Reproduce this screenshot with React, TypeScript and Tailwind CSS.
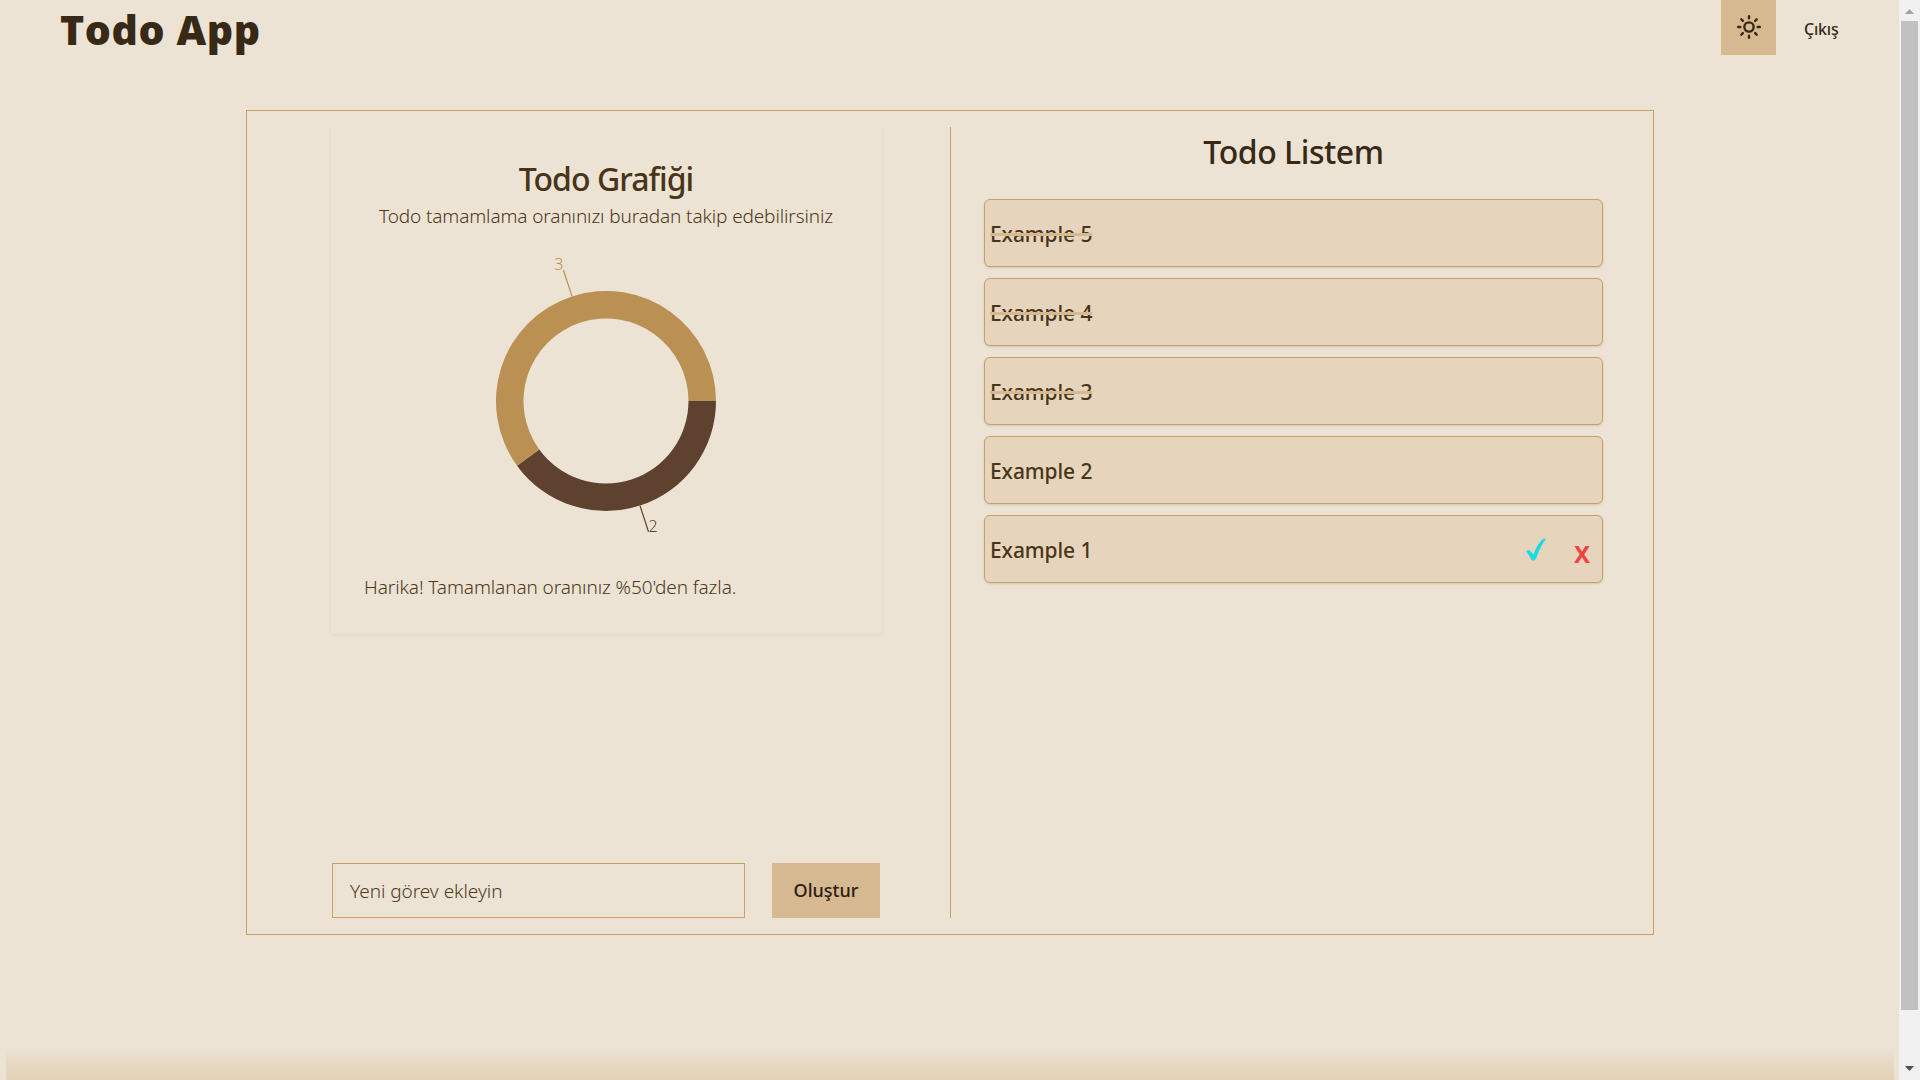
import React from "react";

const todos = [
  { text: "Example 5", done: true },
  { text: "Example 4", done: true },
  { text: "Example 3", done: true },
  { text: "Example 2", done: false },
  { text: "Example 1", done: false, active: true },
];

function SunIcon() {
  return (
    <svg className="mb-[1px]" width="26" height="26" viewBox="0 0 24 24" fill="none" stroke="currentColor" strokeWidth="2.2" strokeLinecap="round">
      <circle cx="12" cy="12" r="4.3" />
      <path d="M12 2v2M12 20v2M4.93 4.93l1.41 1.41M17.66 17.66l1.41 1.41M2 12h2M20 12h2M6.34 17.66l-1.41 1.41M19.07 4.93l-1.41 1.41" />
    </svg>
  );
}

function Donut() {
  return (
    <svg className="block" width="300" height="300" viewBox="-150 -150 300 300" fontSize="16" fontWeight="300">
      <path d="M110 0A110 110 0 0 1 -88.99 64.66L-66.74 48.49A82.5 82.5 0 0 0 82.5 0Z" fill="#5e412e" />
      <path d="M-88.99 64.66A110 110 0 1 1 110 0L82.5 0A82.5 82.5 0 1 0 -66.74 48.49Z" fill="#ba9153" />
      <path d="M34 104.6L42.5 130.8" stroke="#5e412e" strokeWidth="1.2" />
      <path d="M-34 -104.6L-42.5 -130.8" stroke="#ba9153" strokeWidth="1.2" />
      <text x="42.5" y="131" fill="#5e412e">2</text>
      <text x="-42.5" y="-131" textAnchor="end" fill="#ba9153">3</text>
    </svg>
  );
}

function Scrollbar() {
  return (
    <div className="flex h-full w-[21px] shrink-0 flex-col items-center bg-[#f1f1f1]">
      <svg className="block shrink-0" width="21" height="21" viewBox="0 0 21 21"><path d="M6 14h9l-4.5-5z" fill="#a3a3a3" /></svg>
      <div className="h-[989px] w-[17px] bg-[#c1c1c1]" />
      <div className="grow" />
      <svg className="block shrink-0" width="21" height="21" viewBox="0 0 21 21"><path d="M6 7h9l-4.5 5z" fill="#505050" /></svg>
    </div>
  );
}

export default function App() {
  return (
    <div className="flex h-[1080px] w-[1920px] overflow-hidden bg-[#ece3d4] font-['Noto_Sans',sans-serif] text-[#372916]">
      <div className="flex w-[1899px] flex-col">
        <header className="flex h-[55px] justify-between pr-[60px] pl-[60px]">
          <h1 className="font-['Open_Sans',sans-serif] text-[41px] leading-[59px] font-extrabold tracking-[0.6px] whitespace-nowrap">Todo App</h1>
          <div className="flex">
            <button className="flex size-[55px] items-center justify-center bg-[#d6b990]"><SunIcon /></button>
            <span className="ml-[28px] w-[35px] text-[16px] leading-[58px] font-medium tracking-[-0.2px] whitespace-nowrap">Çıkış</span>
          </div>
        </header>

        <main className="mt-[55px] ml-[246px] flex h-[825px] w-[1408px] border border-[#c9a063] py-4">
          <section className="flex w-[704px] flex-col border-r border-[#c9a063] pl-[84px]">
            <div className="flex h-[507px] w-[551px] flex-col items-center pr-px shadow-[0_1px_3px_rgba(0,0,0,0.06)]">
              <h2 className="mt-[30px] text-[32px] leading-[44px] font-medium tracking-[-0.95px] whitespace-nowrap text-[#483519]">Todo Grafiği</h2>
              <p className="text-[19px] leading-[30px] font-light tracking-[-0.12px] whitespace-nowrap text-[#4f3818]">Todo tamamlama oranınızı buradan takip edebilirsiniz</p>
              <div className="mt-[20px] h-[300px]"><Donut /></div>
              <p className="mt-[21px] w-full pl-[33px] text-[19px] leading-[30px] font-light tracking-[-0.09px] whitespace-nowrap text-[#4f3818]">Harika! Tamamlanan oranınız %50'den fazla.</p>
            </div>
            <div className="mt-auto flex h-[55px]">
              <div className="ml-px flex w-[413px] items-center border border-[#c9a063] pt-[2px] pl-[17px] text-[19px] font-light tracking-[-0.04px] whitespace-nowrap text-[#4f3818]">Yeni görev ekleyin</div>
              <button className="ml-[27px] flex w-[108px] items-center justify-center bg-[#d6b990] text-[18px] font-medium text-[#2b2010]">Oluştur</button>
            </div>
          </section>
          <section className="flex w-[702px] flex-col pr-[50px] pl-[33px]">
            <h2 className="mt-[3px] mb-[25px] text-center text-[32px] leading-[44px] font-medium tracking-[-0.45px] whitespace-nowrap">Todo Listem</h2>
            <ul className="flex flex-col gap-[11px]">
              {todos.map((todo) => (
                <li key={todo.text} className="flex h-[68px] items-center justify-between rounded-md border border-[#c9a063] bg-[#e6d5bc] pr-[12px] pl-[5px] shadow-sm">
                  <span className={todo.done ? "pt-[4px] text-[21px] font-medium tracking-[-0.1px] text-[#483519] line-through decoration-[#d6b990] decoration-[3px] [text-decoration-skip-ink:none]" : "pt-[4px] text-[21px] font-medium tracking-[-0.1px] text-[#483519]"}>{todo.text}</span>
                  {todo.active && (
                    <div className="flex items-center">
                      <svg className="mt-[2px] mr-[28px] block" width="20" height="24" viewBox="0 0 20 24"><path d="M0.5 13.5Q2 11.5 4 13L7.5 17Q11 7 16.5 1.5Q18 .7 19.5 1.2Q14 8 9.5 21Q8.5 23 6 22Q4 18 0.5 13.5Z" fill="#17dce4" stroke="#17dce4" strokeWidth="0.6" /></svg>
                      <span className="mt-[9px] text-[24px] leading-[34px] font-bold text-[#ef4444]">X</span>
                    </div>
                  )}
                </li>
              ))}
            </ul>
          </section>
        </main>
        <div className="mt-auto mr-[5px] ml-[6px] h-[33px] bg-linear-to-b from-[#ece3d4] via-[#e7d9c5] to-[#e3d2b6]" />
      </div>
      <Scrollbar />
    </div>
  );
}
